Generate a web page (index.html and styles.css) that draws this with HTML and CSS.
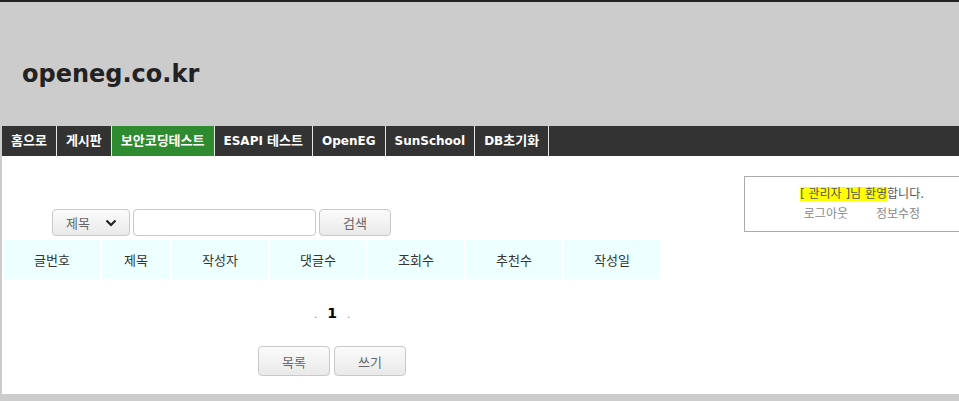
FILE: index.html
```html
<!DOCTYPE html>
<html lang="ko">

<head>
    <meta charset="UTF-8">
    <meta name="viewport" content="width=device-width, initial-scale=1.0">
    <title>openeg.co.kr - 게시판</title>
    <link rel="stylesheet" href="styles.css">
</head>

<body>
    <div class="header">
        <h1>openeg.co.kr</h1>
    </div>

    <ul class="nav">
        <li><a href="#"><span class="ko">홈으로</span></a></li>
        <li><a href="#"><span class="ko">게시판</span></a></li>
        <li class="active"><a href="#"><span class="ko">보안코딩테스트</span></a></li>
        <li><a href="#">ESAPI <span class="ko">테스트</span></a></li>
        <li><a href="#">OpenEG</a></li>
        <li><a href="#">SunSchool</a></li>
        <li><a href="#">DB<span class="ko">초기화</span></a></li>
    </ul>

    <div class="main">
        <div class="board">
            <form class="search">
                <label class="select-box">
                    <span>제목</span>
                    <svg width="12" height="8" viewBox="0 0 12 8">
                        <path d="M1.5 1.5 L6 6 L10.5 1.5" fill="none" stroke="#222" stroke-width="2.2" />
                    </svg>
                </label>
                <input type="text" class="search-input">
                <button type="button" class="btn search-btn">검색</button>
            </form>

            <table class="list">
                <thead>
                    <tr>
                        <th class="c-num">글번호</th>
                        <th class="c-title">제목</th>
                        <th class="c-writer">작성자</th>
                        <th class="c-cmt">댓글수</th>
                        <th class="c-hit">조회수</th>
                        <th class="c-rec">추천수</th>
                        <th class="c-date">작성일</th>
                    </tr>
                </thead>
            </table>

            <div class="paging">
                <span class="dot">.</span><b>1</b><span class="dot">.</span>
            </div>

            <div class="actions">
                <button type="button" class="btn">목록</button>
                <button type="button" class="btn">쓰기</button>
            </div>
        </div>

        <div class="login-box">
            <p><mark>[ 관리자 ]님 환영</mark>합니다.</p>
            <p class="links"><a href="#">로그아웃</a><a href="#">정보수정</a></p>
        </div>
    </div>
</body>

</html>
```

FILE: styles.css
```css
* {
    margin: 0;
    padding: 0;
    box-sizing: border-box;
}

body {
    font-family: "DejaVu Sans", "Noto Sans CJK KR", sans-serif;
    background-color: #cccccc;
    border-top: 2px solid #222;
    color: #333;
    overflow: hidden;
    height: 401px;
}

/* Header */
.header {
    height: 124px;
    padding: 57px 0 0 22px;
}

.header h1 {
    font-size: 24px;
    line-height: 30px;
    color: #222;
}

/* Navigation */
.nav {
    list-style: none;
    display: flex;
    height: 30px;
    margin-left: 2px;
    background-color: #333;
}

.nav li {
    border-right: 1px solid #e8e8e8;
}

.nav a {
    display: block;
    padding: 0 9px;
    line-height: 30px;
    font-size: 12px;
    font-weight: bold;
    color: #fff;
    text-decoration: none;
}

.nav .ko {
    font-size: 13px;
}

.nav .active {
    background-color: #2e8b30;
}

/* Main area */
.main {
    display: flex;
    margin-left: 2px;
    height: 238px;
    background-color: #fff;
}

.board {
    flex: none;
    width: 660px;
    padding-top: 53px;
}

/* Search */
.search {
    display: flex;
    gap: 3px;
    margin-left: 50px;
    height: 27px;
}

.btn,
.select-box {
    border: 1px solid #c9c9c9;
    border-radius: 4px;
    background: linear-gradient(#fbfbfb, #e9e9e9);
    font-family: inherit;
    font-size: 13px;
    color: #666;
}

.select-box {
    width: 78px;
    display: flex;
    align-items: center;
    justify-content: space-between;
    padding: 0 12px 0 13px;
}

.search-input {
    width: 183px;
    border: 1px solid #c9c9c9;
    border-radius: 4px;
}

.search-btn {
    width: 72px;
}

/* Table */
.list {
    width: 660px;
    margin-top: 2px;
    border-spacing: 2px;
    table-layout: fixed;
}

.list th {
    height: 39px;
    background-color: #eeffff;
    font-size: 13px;
    font-weight: normal;
    color: #333;
}

.c-num,
.c-writer,
.c-cmt,
.c-hit,
.c-rec,
.c-date { width: 96px; }
.c-title { width: 68px; }

/* Paging */
.paging {
    margin-top: 22px;
    line-height: 20px;
    text-align: center;
    font-size: 14px;
    color: #000;
}

.paging .dot {
    font-size: 10px;
    color: #888;
    margin: 0 10px;
}

.actions {
    display: flex;
    justify-content: center;
    gap: 4px;
    margin-top: 21px;
}

.actions .btn {
    width: 72px;
    height: 30px;
}

/* Login box */
.login-box {
    margin: 20px 0 0 82px;
    flex: none;
    width: 236px;
    height: 56px;
    border: 1px solid #aaa;
    padding-top: 7px;
    text-align: center;
    font-size: 12px;
    color: #555;
}

.login-box p {
    line-height: 20px;
}

.login-box mark {
    background-color: #ffff00;
    color: #555;
}

.links a {
    color: #888;
    text-decoration: none;
    margin: 0 14px;
}
```
